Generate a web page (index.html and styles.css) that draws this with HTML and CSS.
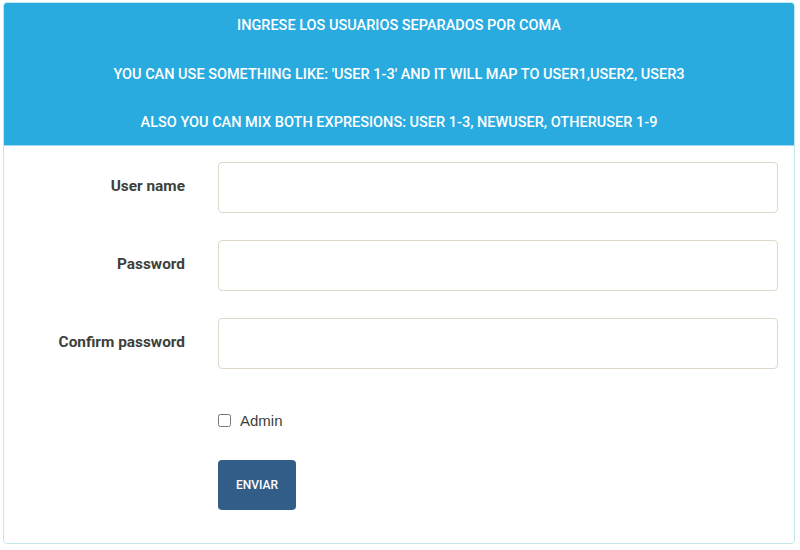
FILE: index.html
```html
<!DOCTYPE html>
<html>
<head>
<meta charset="utf-8">
<link rel="stylesheet" href="styles.css">
</head>
<body>
<div class="panel">
  <div class="panel-heading">
    <p>INGRESE LOS USUARIOS SEPARADOS POR COMA</p>
    <p>YOU CAN USE SOMETHING LIKE: 'USER 1-3' AND IT WILL MAP TO USER1,USER2, USER3</p>
    <p>ALSO YOU CAN MIX BOTH EXPRESIONS: USER 1-3, NEWUSER, OTHERUSER 1-9</p>
  </div>
  <form class="panel-body">
    <label class="lbl" for="u">User name</label>
    <input class="field" id="u" type="text">
    <label class="lbl" for="p">Password</label>
    <input class="field" id="p" type="password">
    <label class="lbl" for="c">Confirm password</label>
    <input class="field" id="c" type="password">
    <div class="check-row">
      <input type="checkbox" id="a" class="chk">
      <label for="a" class="chk-label">Admin</label>
    </div>
    <div class="btn-row">
      <button type="button" class="btn">ENVIAR</button>
    </div>
  </form>
</div>
</body>
</html>
```

FILE: styles.css
```css
html, body {
  margin: 0;
  padding: 0;
  background: #fff;
}
body {
  padding: 2px 4px 0 3px;
  font-family: Roboto, "Liberation Sans", sans-serif;
}
.panel {
  border: 1px solid #c5e8ef;
  border-radius: 4px;
  overflow: hidden;
  width: 792px;
  box-sizing: border-box;
  height: 542px;
}
.panel-heading {
  background: #29abe0;
  color: #fff;
  text-align: center;
  font-size: 14.5px;
  font-weight: 500;
  padding: 13px 15px 12px;
  display: flex;
  flex-direction: column;
  gap: 28.5px;
  border-bottom: 1px solid #9fd9ef;
}
.panel-heading p {
  margin: 0;
  line-height: 20px;
}
.panel-body {
  display: grid;
  grid-template-columns: 181px 1fr;
  column-gap: 33px;
  row-gap: 27px;
  padding: 16px 16px 0 0;
  align-items: center;
}
.lbl {
  text-align: right;
  font-weight: 700;
  font-size: 15.4px;
  color: #3e3f3a;
  padding-bottom: 4px;
}
.field {
  height: 51px;
  box-sizing: border-box;
  border: 1px solid #dfd7ca;
  border-radius: 4px;
  width: 100%;
  margin: 0;
  background: #fff;
}
.check-row {
  grid-column: 2;
  display: flex;
  align-items: center;
  margin-top: 16px;
}
.chk {
  margin: 0 9px 0 0;
  width: 13px;
  height: 13px;
}
.chk-label {
  font-family: "Liberation Sans", Arial, sans-serif;
  font-size: 15px;
  color: #3e3f3a;
}
.btn-row {
  grid-column: 2;
  margin-top: 4px;
}
.btn {
  background: #325d88;
  color: #fff;
  border: none;
  border-radius: 4px;
  width: 78px;
  height: 50px;
  font-family: Roboto, sans-serif;
  font-weight: 500;
  font-size: 12px;
  padding: 0;
}
```
